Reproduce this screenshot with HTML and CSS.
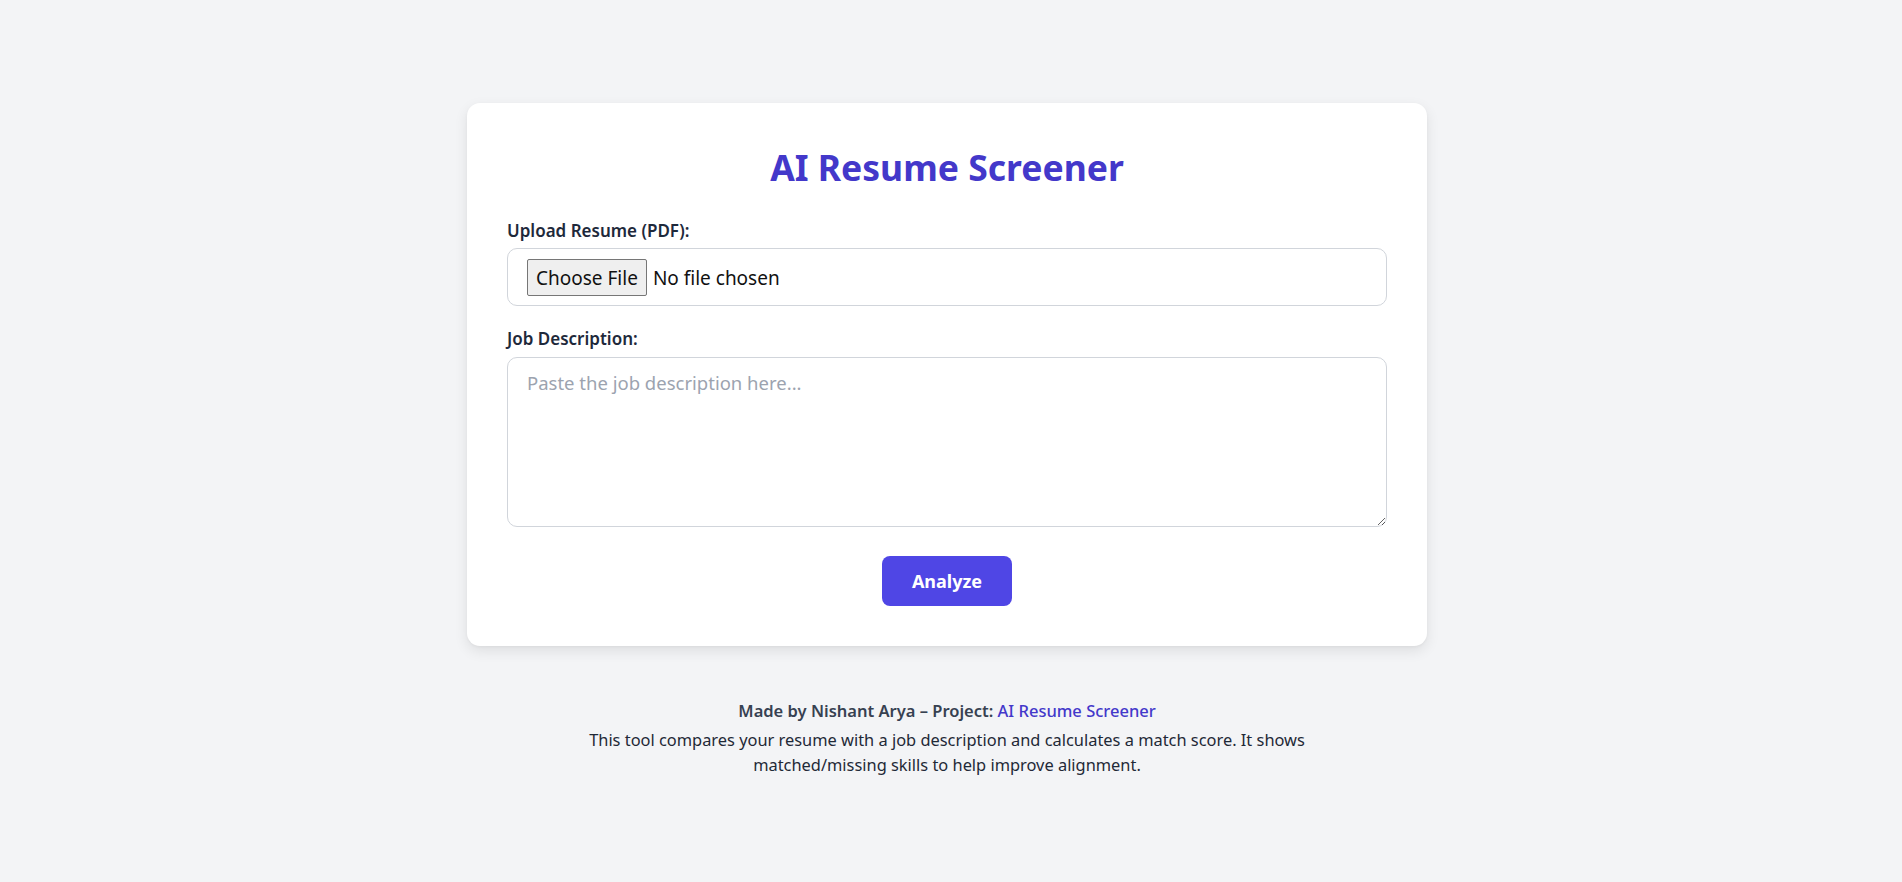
FILE: index.html
```html
<!DOCTYPE html>
<html lang="en">
<head>
<meta charset="utf-8">
<title>AI Resume Screener</title>
<link rel="stylesheet" href="styles.css">
</head>
<body>
  <main class="page">
    <section class="card">
      <h1 class="title">AI Resume Screener</h1>
      <form class="form">
        <label class="label" for="resume">Upload Resume (PDF):</label>
        <input class="file-input" type="file" id="resume" accept="application/pdf">
        <label class="label label-second" for="jd">Job Description:</label>
        <textarea class="textarea" id="jd" placeholder="Paste the job description here..."></textarea>
        <div class="actions">
          <button class="btn" type="button">Analyze</button>
        </div>
      </form>
    </section>
    <footer class="footer">
      <p class="credit">Made by Nishant Arya – Project: <a class="credit-link" href="#">AI Resume Screener</a></p>
      <p class="about">This tool compares your resume with a job description and calculates a match score. It shows matched/missing skills to help improve alignment.</p>
    </footer>
  </main>
</body>
</html>
```

FILE: styles.css
```css
* { box-sizing: border-box; }

html, body {
  margin: 0;
  padding: 0;
}

body {
  background: #f3f4f6;
  font-family: "Noto Sans", "Open Sans", sans-serif;
  color: #1f2937;
  padding-right: 8px;
}

.page {
  display: flex;
  flex-direction: column;
  align-items: center;
  padding-top: 103px;
}

.card {
  width: 960px;
  background: #ffffff;
  border-radius: 13px;
  padding: 40px 40px 40px;
  box-shadow: 0 5px 14px rgba(0, 0, 0, 0.09), 0 1px 3px rgba(0, 0, 0, 0.04);
}

.title {
  margin: 0 0 28px;
  text-align: center;
  font-size: 35.5px;
  line-height: 48px;
  font-weight: 700;
  color: #4338ca;
}

.form {
  display: flex;
  flex-direction: column;
}

.label {
  font-size: 17px;
  line-height: 24px;
  font-weight: 600;
  color: #1e293b;
  margin-bottom: 5px;
}

.label-second {
  margin-top: 21px;
  margin-bottom: 6px;
}

.file-input {
  height: 58px;
  width: 100%;
  border: 1px solid #d1d5db;
  border-radius: 10px;
  padding: 0 19px;
  font-family: "Noto Sans", "Open Sans", sans-serif;
  font-size: 19px;
  color: #111111;
  background: #ffffff;
}

.file-input::file-selector-button {
  height: 37px;
  margin: 10px 6px 0 0;
  padding: 0 8px;
  font-family: "Noto Sans", "Open Sans", sans-serif;
  font-size: 19px;
  color: #111111;
  background: #efefef;
  border: 1px solid #767676;
  border-radius: 2px;
}

.textarea {
  height: 170px;
  width: 100%;
  border: 1px solid #d1d5db;
  border-radius: 10px;
  padding: 13px 19px;
  font-family: "Noto Sans", "Open Sans", sans-serif;
  font-size: 18.5px;
  line-height: 24px;
  color: #111827;
  resize: vertical;
}

.textarea::placeholder {
  color: #9ca3af;
}

.actions {
  display: flex;
  justify-content: center;
  margin-top: 29px;
}

.btn {
  height: 50px;
  padding: 0 30px;
  background: #4f46e5;
  color: #ffffff;
  border: none;
  border-radius: 8px;
  font-family: "Noto Sans", "Open Sans", sans-serif;
  font-size: 18px;
  font-weight: 700;
  cursor: pointer;
}

.footer {
  margin-top: 53px;
  width: 760px;
  text-align: center;
}

.credit {
  margin: 0 0 4px;
  font-size: 16.5px;
  line-height: 24px;
  font-weight: 600;
  color: #374151;
}

.credit-link {
  color: #4338ca;
  font-weight: 500;
  text-decoration: none;
}

.about {
  margin: 0;
  font-size: 16.4px;
  line-height: 25px;
  color: #1f2937;
}
```
